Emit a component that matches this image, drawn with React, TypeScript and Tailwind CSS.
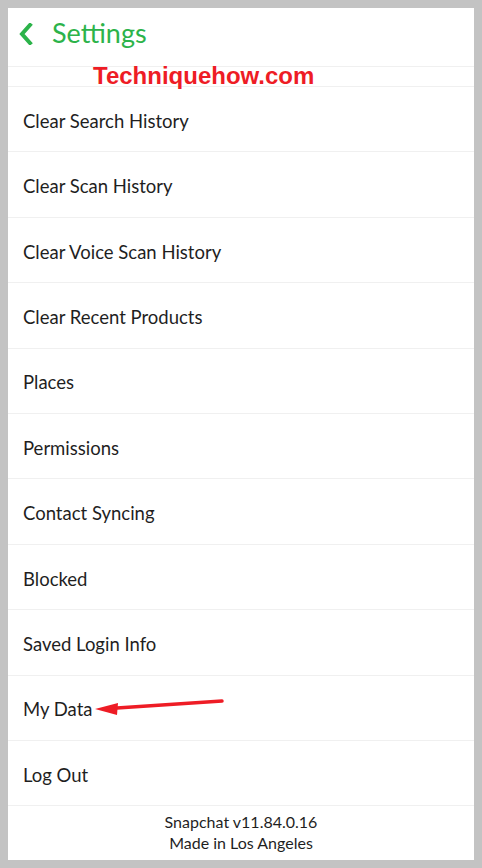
import React from "react";

const items = [
  "Clear Search History",
  "Clear Scan History",
  "Clear Voice Scan History",
  "Clear Recent Products",
  "Places",
  "Permissions",
  "Contact Syncing",
  "Blocked",
  "Saved Login Info",
  "My Data",
  "Log Out",
];

export default function App() {
  return (
    <div className="w-[482px] h-[868px] bg-[#c3c3c3] p-[8px]">
      <div
        className="relative w-[466px] h-[852px] bg-white flex flex-col text-[#1f1f1f]"
        style={{ fontFamily: "Lato, 'Open Sans', sans-serif" }}
      >
        <div className="h-[59px] flex items-center border-b border-[#f0f0f0]">
          <svg width="14" height="22" viewBox="0 0 14 22" className="ml-[11px] mt-[-7px]">
            <path d="M11 2 L3 11 L11 20" fill="none" stroke="#2cb34a" strokeWidth="4" strokeLinecap="square" strokeLinejoin="miter" />
          </svg>
          <span className="ml-[19px] text-[27px] text-[#2cb34a] leading-none mt-[-10px]">Settings</span>
        </div>
        <div className="h-[20px] border-b border-[#f0f0f0]" />
        {items.map((t) => (
          <div
            key={t}
            className="h-[65.4px] flex items-center pl-[15px] pt-[5px] text-[18.5px] border-b border-[#f0f0f0]"
          >
            {t}
          </div>
        ))}
        <div className="flex-1 flex flex-col items-center justify-center text-[16px] leading-[21px] pb-[2px]">
          <div>Snapchat v11.84.0.16</div>
          <div>Made in Los Angeles</div>
        </div>
        <div
          className="absolute left-[85px] top-[56px] text-[24px] font-bold text-[#ee1c25] leading-none"
          style={{ fontFamily: "'Liberation Sans', Arial, sans-serif" }}
        >
          Techniquehow.com
        </div>
        <svg className="absolute left-[72px] top-[680px]" width="150" height="30" viewBox="0 0 150 30">
          <path d="M142 13 L37 20" fill="none" stroke="#ee1c25" strokeWidth="3.5" strokeLinecap="round" />
          <path d="M15 21 L38 15 L37 27 Z" fill="#ee1c25" />
        </svg>
      </div>
    </div>
  );
}
